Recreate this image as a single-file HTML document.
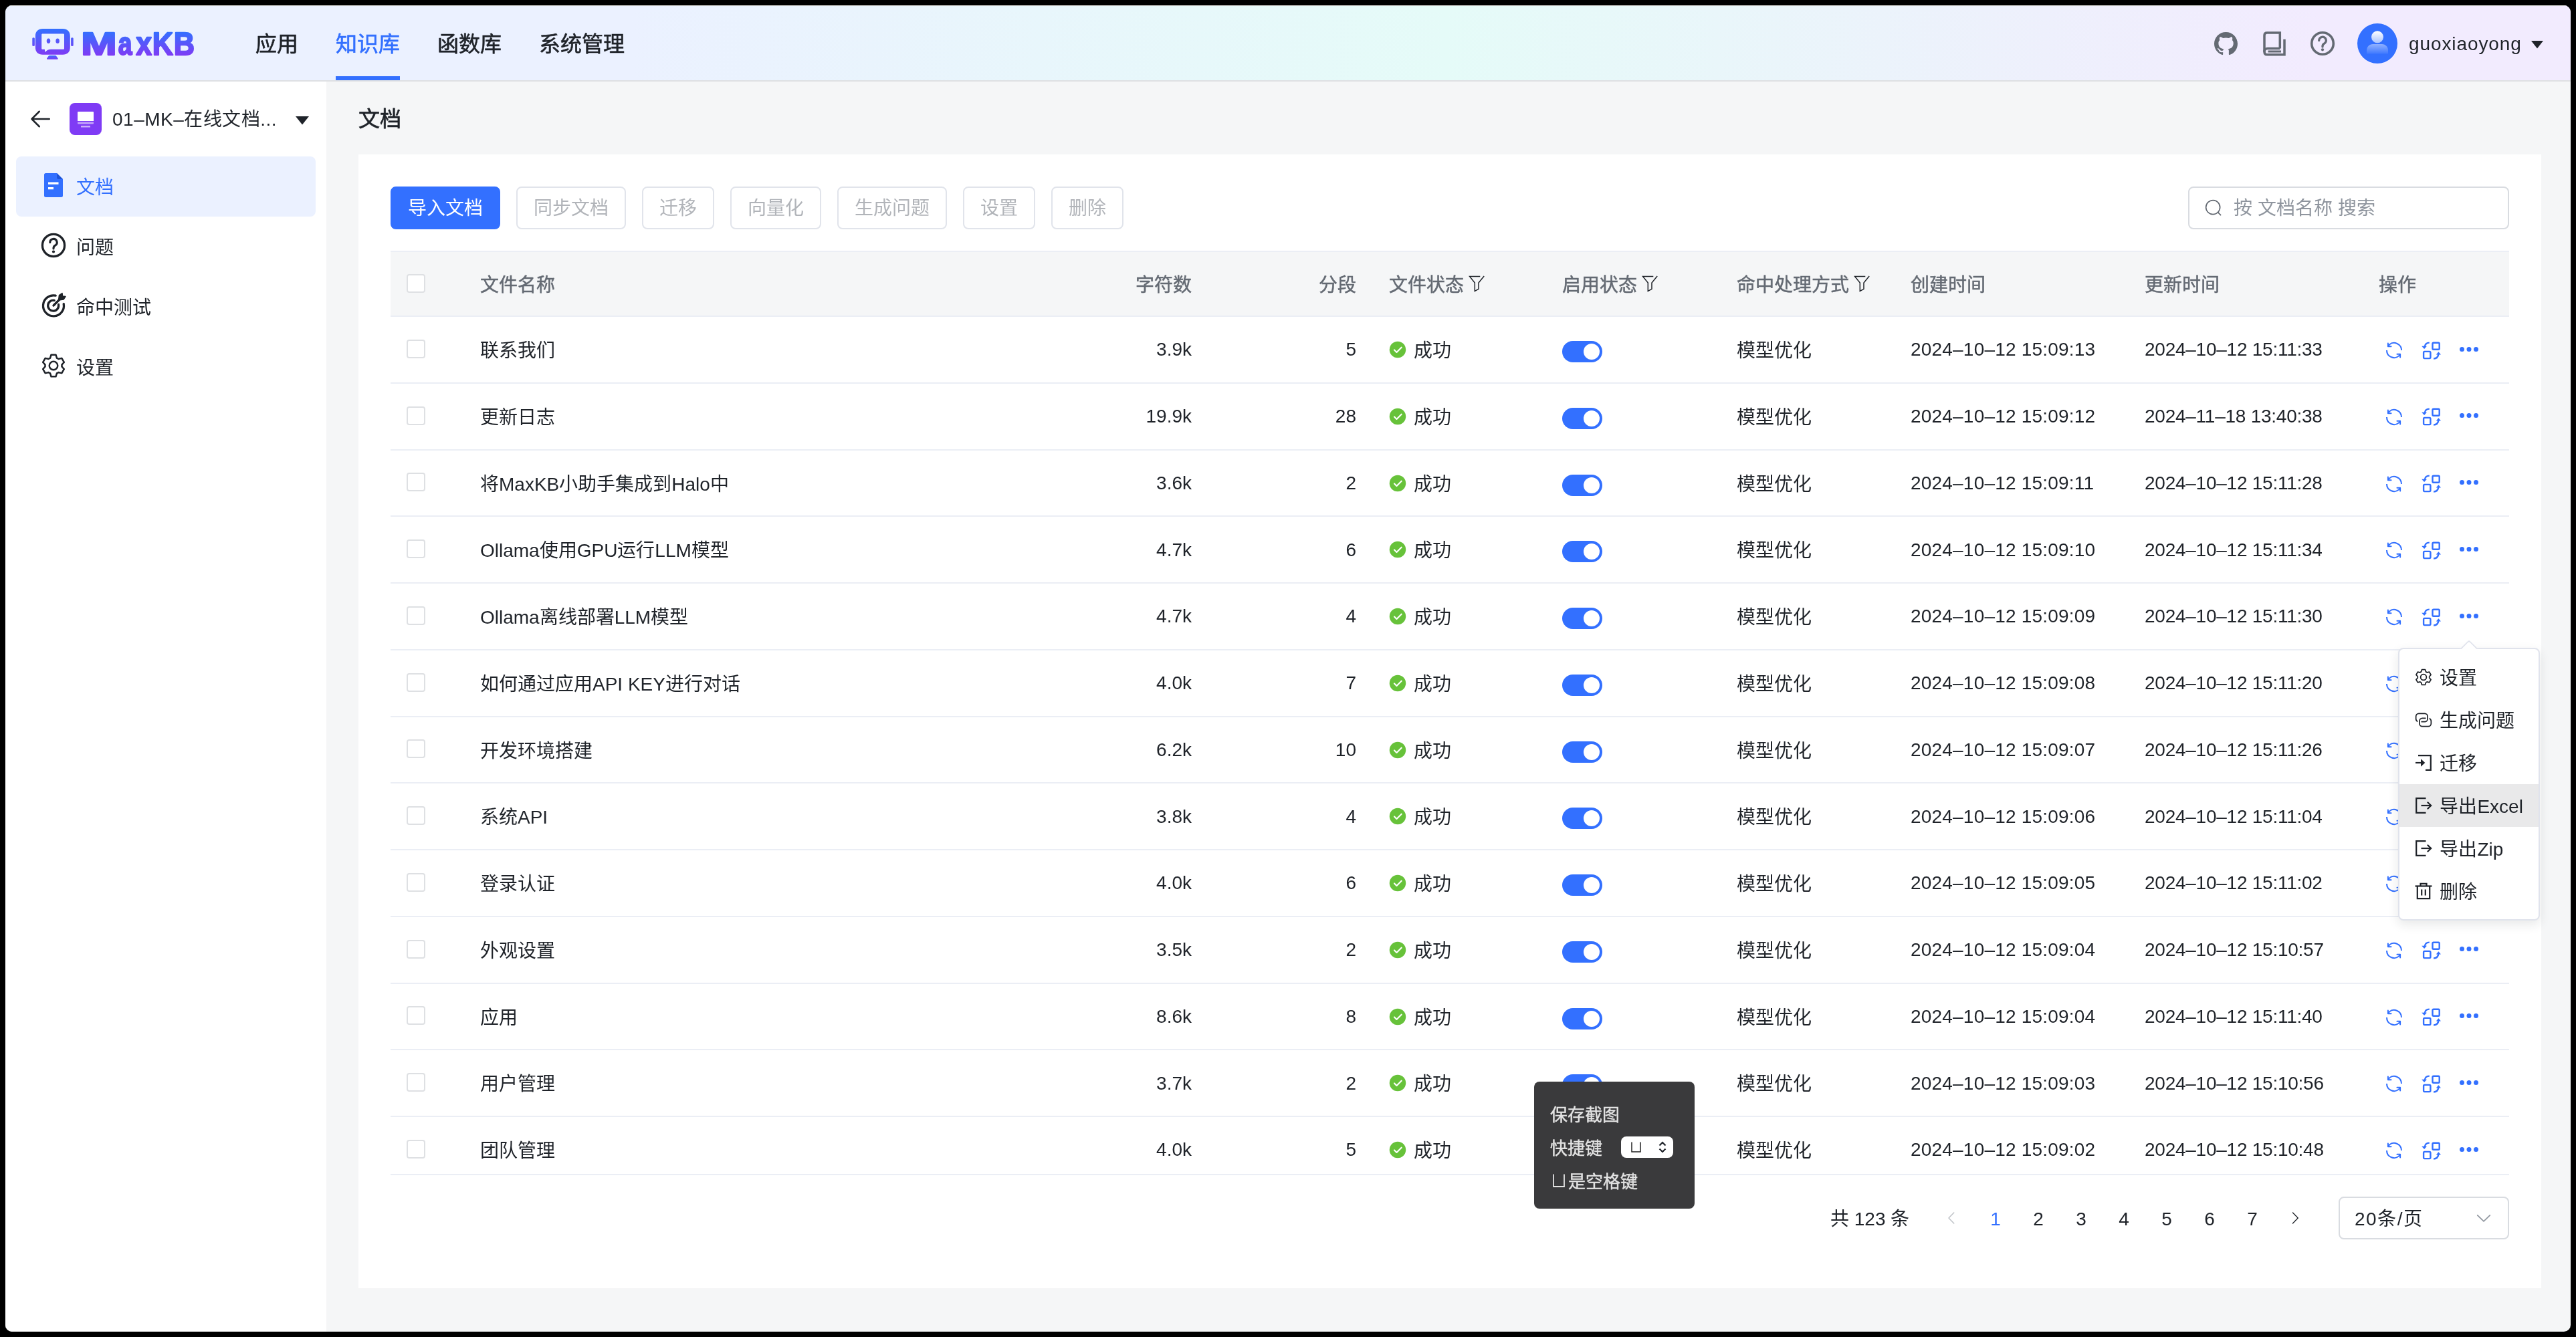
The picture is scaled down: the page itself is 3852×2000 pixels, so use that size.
<!DOCTYPE html>
<html lang="zh-CN">
<head>
<meta charset="utf-8">
<title>MaxKB</title>
<style>
*{box-sizing:border-box;margin:0;padding:0}
html,body{width:3852px;height:2000px;background:#000;overflow:hidden}
body{font-family:"Liberation Sans",sans-serif;color:#1f2329;position:relative}
#frame:after{content:"";position:absolute;left:0;right:0;top:0;height:1px;background:#e5e6e1;z-index:9}
#frame{position:absolute;left:8px;top:8px;width:3836px;height:1984px;border-radius:10px;overflow:hidden;background:#f5f6f7}
#win{position:absolute;left:0;top:0;width:1918px;height:992px;zoom:2;font-size:14px;line-height:22px;will-change:transform}
.abs{position:absolute}
svg{display:block}
/* header */
#hdr{position:absolute;left:0;top:0;width:1918px;height:57px;border-bottom:1px solid #dee0e3;
 background:linear-gradient(90deg,#ebf1ff 24.34%,#e5fbf8 56.18%,#f2ebfe 90.18%)}
.nav{position:absolute;top:0;height:56px;line-height:58.600px;font-size:16px;-webkit-text-stroke:0.300px currentColor;color:#1f2329;white-space:nowrap}
.nav.act{color:#3370ff}
.nav.act:after{content:"";position:absolute;left:0;right:0;bottom:0;height:3px;background:#3370ff}
/* sidebar */
#side{position:absolute;left:0;top:57px;width:240px;height:935px;background:#fff}
.mi{position:absolute;left:8px;width:224px;height:45px;border-radius:4px;font-size:14px;line-height:45px;color:#1f2329}
.mi.act{background:#ebf1ff;color:#3370ff}
.mi span{position:absolute;left:45.100px;top:0.900px}
.mi svg{position:absolute;left:20px;top:13.5px}
/* content */
#title{position:absolute;left:264.100px;top:72.800px;font-size:16px;line-height:24px;-webkit-text-stroke:0.350px currentColor}
#card{position:absolute;left:264px;top:111.5px;width:1632px;height:848px;background:#fff}
.btn{position:absolute;top:135.500px;height:32px;border-radius:4px;border:1px solid #e1e4eb;background:#fff;color:#b1b4b9;font-size:14px;line-height:31px;text-align:center;white-space:nowrap}
.btn.pri{background:#3370ff;border-color:#3370ff;color:#fff}
</style>
</head>
<body>
<div id="frame"><div id="win">
<!-- header -->
<div id="hdr">
 <svg class="abs" style="left:20px;top:17.250px" width="31" height="23" viewBox="0 0 62 46">
  <defs><linearGradient id="lg" gradientUnits="userSpaceOnUse" x1="0" y1="0" x2="0" y2="39"><stop offset="0" stop-color="#3370ff"/><stop offset="1" stop-color="#7f3bf5"/></linearGradient>
  <linearGradient id="lg2" gradientUnits="userSpaceOnUse" x1="0" y1="40" x2="0" y2="46"><stop offset="0" stop-color="#3d6cff"/><stop offset="1" stop-color="#7f3bf5"/></linearGradient></defs>
  <rect x=".3" y="13.200" width="3.600" height="12.900" rx="1.500" fill="url(#lg)"/>
  <rect x="58.100" y="13.200" width="3.600" height="12.900" rx="1.500" fill="url(#lg)"/>
  <path fill="url(#lg)" fill-rule="evenodd" d="M15.900.1h29.900c7 0 11 4 11 11v16.700c0 7-4 11-11 11H15.900c-7 0-11-4-11-11V11.100c0-7 4-11 11-11zM15.700 7.500c-1 0-1.500.5-1.500 1.500v20.200c0 1 .5 1.500 1.500 1.500h3.100l.5 4.300c2.600-2.800 5.200-4.300 9.200-4.300h18c1 0 1.500-.5 1.500-1.500V9c0-1-.5-1.500-1.500-1.500z"/>
  <ellipse cx="24.500" cy="18.300" rx="2.750" ry="3.800" fill="url(#lg)"/><ellipse cx="38.100" cy="18.300" rx="2.750" ry="3.800" fill="url(#lg)"/>
  <path fill="url(#lg2)" d="M26.300 40h8.200c.6 0 1 .2 1.400.6l2.500 3.400c.6.800.2 1.800-.9 1.800H23.200c-1.100 0-1.500-1-.9-1.800l2.600-3.400c.4-.4.800-.6 1.400-.6z"/>
 </svg>
 <svg class="abs" style="left:56px;top:17px" width="92" height="24" viewBox="0 0 92 24">
  <defs><linearGradient id="lgt" gradientUnits="userSpaceOnUse" x1="0" y1="-17.500" x2="0" y2="0.500"><stop offset="0" stop-color="#3370ff"/><stop offset="1" stop-color="#7f3bf5"/></linearGradient></defs>
  <g font-family="Liberation Sans" font-weight="bold" font-size="24" fill="url(#lgt)" stroke="url(#lgt)" stroke-width="1.200" stroke-linejoin="round"><text transform="translate(0.657 20.150) scale(1.335 1)">M</text><text transform="translate(28.420 20.150) scale(0.775 1)">a</text><text transform="translate(41.730 20.150) scale(0.873 1)">x</text><text transform="translate(54.000 20.150) scale(0.889 1)">K</text><text transform="translate(70.050 20.150) scale(0.890 1)">B</text></g>
 </svg>
 <div class="nav" style="left:187px">应用</div>
 <div class="nav act" style="left:247px">知识库</div>
 <div class="nav" style="left:323px">函数库</div>
 <div class="nav" style="left:399px">系统管理</div>
</div>
<!-- sidebar -->
<div id="side"></div>
<div class="abs" style="left:48px;top:73px;width:24px;height:24px;border-radius:4px;background:#7f3bf5"></div>
<div class="abs" style="left:80px;top:73.5px;font-size:14px;line-height:24px;white-space:nowrap;letter-spacing:0.250px">01–MK–在线文档...</div>
<div class="mi act" style="top:113px"><span>文档</span></div>
<div class="mi" style="top:158px"><span>问题</span></div>
<div class="mi" style="top:203px"><span>命中测试</span></div>
<div class="mi" style="top:248px"><span>设置</span></div>
<!-- content -->
<div id="title">文档</div>
<div id="card"></div>
<div class="btn pri" style="left:288px;width:82px">导入文档</div>
<div class="btn" style="left:382px;width:82px">同步文档</div>
<div class="btn" style="left:476px;width:54px">迁移</div>
<div class="btn" style="left:542px;width:68px">向量化</div>
<div class="btn" style="left:622px;width:82px">生成问题</div>
<div class="btn" style="left:716px;width:54px">设置</div>
<div class="btn" style="left:782px;width:54px">删除</div>
<!-- header right -->
<svg class="abs" style="left:1651.6px;top:19.8px" width="17.5" height="17.5" viewBox="0 0 16 16"><path fill="#646a73" d="M8 0C3.58 0 0 3.58 0 8c0 3.54 2.29 6.53 5.47 7.59.4.07.55-.17.55-.38 0-.19-.01-.82-.01-1.49-2.01.37-2.53-.49-2.69-.94-.09-.23-.48-.94-.82-1.13-.28-.15-.68-.52-.01-.53.63-.01 1.08.58 1.23.82.72 1.21 1.87.87 2.33.66.07-.52.28-.87.51-1.07-1.78-.2-3.64-.89-3.64-3.95 0-.87.31-1.59.82-2.15-.08-.2-.36-1.02.08-2.12 0 0 .67-.21 2.2.82.64-.18 1.32-.27 2-.27.68 0 1.36.09 2 .27 1.53-1.04 2.2-.82 2.2-.82.44 1.1.16 1.92.08 2.12.51.56.82 1.27.82 2.15 0 3.07-1.87 3.75-3.65 3.95.29.25.54.73.54 1.48 0 1.07-.01 1.93-.01 2.2 0 .21.15.46.55.38A8.013 8.013 0 0016 8c0-4.42-3.58-8-8-8z"/></svg>
<svg class="abs" style="left:1688px;top:19.35px" width="17" height="18.5" viewBox="0 0 34 37" fill="none" stroke="#646a73" stroke-width="3.5"><path d="M25.3 25.5V2H6Q2 2 2 6V30.8Q2 34.800 6 34.800H32V11.800"/><path d="M25.300 25.500H7Q2 25.500 2 30.500"/><path d="M7.500 30H27" stroke-width="3"/></svg>
<svg class="abs" style="left:1722.5px;top:18.5px" width="20" height="20" viewBox="0 0 40 40" fill="none" stroke="#646a73" stroke-width="3.6"><circle cx="20" cy="20" r="16.3"/><path d="M14.7 15.5a5.3 5.3 0 1 1 7.8 4.7c-1.7 1-2.5 2-2.5 4v.8" stroke-linecap="round" stroke-width="3.3"/><circle cx="20" cy="29.3" r="2.1" fill="#646a73" stroke="none"/></svg>
<svg class="abs" style="left:1758.5px;top:13.5px" width="30" height="30" viewBox="0 0 60 60">
 <defs><linearGradient id="av1" x1="0" y1="0" x2="0" y2="1"><stop offset="0" stop-color="#fff"/><stop offset="1" stop-color="#a9c3ff"/></linearGradient>
 <linearGradient id="av2" x1="0" y1="0" x2="0" y2="1"><stop offset="0" stop-color="#8fb0ff"/><stop offset="1" stop-color="#3f79ff"/></linearGradient></defs>
 <circle cx="30" cy="30" r="30" fill="#3370ff"/><circle cx="30" cy="20.3" r="9" fill="url(#av1)"/>
 <path d="M14 45.500V40.500c0-5.500 4-9.500 9.500-9.500h13c5.500 0 9.500 4 9.500 9.500V45.500z" fill="url(#av2)"/>
</svg>
<div class="abs" style="left:1797px;top:18px;font-size:14px;line-height:22px;white-space:nowrap;letter-spacing:0.45px">guoxiaoyong</div>
<svg class="abs" style="left:1888.5px;top:26.5px" width="9" height="6" viewBox="0 0 18 12"><path d="M0 0h18l-9 11.500z" fill="#1f2329"/></svg>
<style>
#tbl{position:absolute;left:288px;top:183.5px;width:1584px;height:691.5px;overflow:hidden;border-top:1px solid #ebeef5;font-size:14px}
#tbl:after{content:"";position:absolute;left:0;right:0;bottom:0;height:1px;background:#ebeef5}
.th{position:relative;height:48.5px;background:#f5f6f7;border-bottom:1px solid #ebeef5;color:#646a73;line-height:49.500px;-webkit-text-stroke:0.25px #646a73}
.tr{position:relative;height:49.875px;border-bottom:1px solid #ebeef5;line-height:51px;color:#1f2329}
.c{position:absolute;top:0;white-space:nowrap}
.c1{left:67px}.c2{right:985px}.c3{right:862px}.c4{left:746.5px}.c5{left:876px}.c6{left:1006.5px}.c7{left:1136.5px}.c8{left:1311.5px}.c9{left:1486.5px}
.cb{position:absolute;left:12px;width:14px;height:14px;border:1px solid #dee0e3;border-radius:2px;background:#fff}
.th .cb{top:16.500px}.tr .cb{top:16.900px}
.sw{position:absolute;left:876px;top:18.1px;width:30px;height:16px;border-radius:8px;background:#3370ff}
.sw:after{content:"";position:absolute;right:2px;top:2px;width:12px;height:12px;border-radius:6px;background:#fff}
.st{position:absolute;left:746px;top:17.6px}
.c4t{left:765px}
.ic{position:absolute;top:16.5px}
.fi{display:inline-block;vertical-align:top;margin-left:3.500px;margin-top:17.700px}
.dt{letter-spacing:-.125px}.c7.dt{letter-spacing:.100px}.tr .c2,.tr .c3,.tr .c7,.tr .c8{top:-.800px}
</style>

<div id="tbl">
<div class="th"><i class="cb"></i><span class="c c1">文件名称</span><span class="c c2">字符数</span><span class="c c3">分段</span><span class="c c4">文件状态<svg class="fi" width="12" height="12.5" viewBox="0 0 24 25" fill="none" stroke="#1f2329" stroke-width="1.5"><path d="M17.300 1.500H1.500L9.300 11V23.500L15 20.300V11L23.200 1"/></svg></span><span class="c c5">启用状态<svg class="fi" width="12" height="12.5" viewBox="0 0 24 25" fill="none" stroke="#1f2329" stroke-width="1.5"><path d="M17.300 1.500H1.500L9.300 11V23.500L15 20.300V11L23.200 1"/></svg></span><span class="c c6">命中处理方式<svg class="fi" width="12" height="12.5" viewBox="0 0 24 25" fill="none" stroke="#1f2329" stroke-width="1.5"><path d="M17.300 1.500H1.500L9.300 11V23.500L15 20.300V11L23.200 1"/></svg></span><span class="c c7">创建时间</span><span class="c c8">更新时间</span><span class="c c9">操作</span></div>
<div class="tr"><i class="cb"></i><span class="c c1">联系我们</span><span class="c c2">3.9k</span><span class="c c3">5</span><svg class="st" width="14" height="14" viewBox="0 0 1024 1024"><path fill="#67c23a" d="M512 64a448 448 0 1 1 0 896 448 448 0 0 1 0-896zm-55.808 536.384-99.520-99.584a38.400 38.400 0 1 0-54.336 54.336l126.720 126.720a38.400 38.400 0 0 0 54.336 0l262.400-262.464a38.400 38.400 0 1 0-54.272-54.336L456.192 600.384z"/></svg><span class="c c4t">成功</span><i class="sw"></i><span class="c c6">模型优化</span><span class="c c7 dt">2024–10–12 15:09:13</span><span class="c c8 dt">2024–10–12 15:11:33</span><svg class="ic" style="left:1490px;top:17px" width="16" height="16" viewBox="0 0 1024 1024"><path fill="#3370ff" d="M771.776 794.880A384 384 0 0 1 128 512h64a320 320 0 0 0 555.712 216.448H654.720a32 32 0 1 1 0-64h149.056a32 32 0 0 1 32 32v148.928a32 32 0 1 1-64 0v-50.560zM276.288 295.616h92.992a32 32 0 0 1 0 64H220.160a32 32 0 0 1-32-32V178.560a32 32 0 0 1 64 0v50.560A384 384 0 0 1 896.128 512h-64a320 320 0 0 0-555.776-216.384z"/></svg><svg class="ic" style="left:1518.500px;top:18.250px" width="14.500" height="13.500" viewBox="0 0 29 27" fill="none" stroke="#3370ff" stroke-width="2.400"><rect x="16.500" y="1.700" width="10.200" height="10.100" rx="1.500"/><rect x="3.100" y="14.900" width="10.300" height="10.200" rx="1.500"/><path d="M11.800 1.600Q5.500 1.800 4.800 7.500"/><path d="M.2 6.800H8L4.100 11z" fill="#3370ff" stroke="none"/><path d="M18.100 25.500Q24.500 25.300 25.300 19"/><path d="M25.400 15.300L29 19.500H21.800z" fill="#3370ff" stroke="none"/></svg><svg class="ic" style="left:1546px;top:15.8px" width="16" height="16" viewBox="0 0 1024 1024"><path fill="#3370ff" d="M176 416a112 112 0 1 1 0 224 112 112 0 0 1 0-224zm336 0a112 112 0 1 1 0 224 112 112 0 0 1 0-224zm336 0a112 112 0 1 1 0 224 112 112 0 0 1 0-224z"/></svg></div>
<div class="tr"><i class="cb"></i><span class="c c1">更新日志</span><span class="c c2">19.9k</span><span class="c c3">28</span><svg class="st" width="14" height="14" viewBox="0 0 1024 1024"><path fill="#67c23a" d="M512 64a448 448 0 1 1 0 896 448 448 0 0 1 0-896zm-55.808 536.384-99.520-99.584a38.400 38.400 0 1 0-54.336 54.336l126.720 126.720a38.400 38.400 0 0 0 54.336 0l262.400-262.464a38.400 38.400 0 1 0-54.272-54.336L456.192 600.384z"/></svg><span class="c c4t">成功</span><i class="sw"></i><span class="c c6">模型优化</span><span class="c c7 dt">2024–10–12 15:09:12</span><span class="c c8 dt">2024–11–18 13:40:38</span><svg class="ic" style="left:1490px;top:17px" width="16" height="16" viewBox="0 0 1024 1024"><path fill="#3370ff" d="M771.776 794.880A384 384 0 0 1 128 512h64a320 320 0 0 0 555.712 216.448H654.720a32 32 0 1 1 0-64h149.056a32 32 0 0 1 32 32v148.928a32 32 0 1 1-64 0v-50.560zM276.288 295.616h92.992a32 32 0 0 1 0 64H220.160a32 32 0 0 1-32-32V178.560a32 32 0 0 1 64 0v50.560A384 384 0 0 1 896.128 512h-64a320 320 0 0 0-555.776-216.384z"/></svg><svg class="ic" style="left:1518.500px;top:18.250px" width="14.500" height="13.500" viewBox="0 0 29 27" fill="none" stroke="#3370ff" stroke-width="2.400"><rect x="16.500" y="1.700" width="10.200" height="10.100" rx="1.500"/><rect x="3.100" y="14.900" width="10.300" height="10.200" rx="1.500"/><path d="M11.800 1.600Q5.500 1.800 4.800 7.500"/><path d="M.2 6.800H8L4.100 11z" fill="#3370ff" stroke="none"/><path d="M18.100 25.500Q24.500 25.300 25.300 19"/><path d="M25.400 15.300L29 19.500H21.800z" fill="#3370ff" stroke="none"/></svg><svg class="ic" style="left:1546px;top:15.8px" width="16" height="16" viewBox="0 0 1024 1024"><path fill="#3370ff" d="M176 416a112 112 0 1 1 0 224 112 112 0 0 1 0-224zm336 0a112 112 0 1 1 0 224 112 112 0 0 1 0-224zm336 0a112 112 0 1 1 0 224 112 112 0 0 1 0-224z"/></svg></div>
<div class="tr"><i class="cb"></i><span class="c c1">将MaxKB小助手集成到Halo中</span><span class="c c2">3.6k</span><span class="c c3">2</span><svg class="st" width="14" height="14" viewBox="0 0 1024 1024"><path fill="#67c23a" d="M512 64a448 448 0 1 1 0 896 448 448 0 0 1 0-896zm-55.808 536.384-99.520-99.584a38.400 38.400 0 1 0-54.336 54.336l126.720 126.720a38.400 38.400 0 0 0 54.336 0l262.400-262.464a38.400 38.400 0 1 0-54.272-54.336L456.192 600.384z"/></svg><span class="c c4t">成功</span><i class="sw"></i><span class="c c6">模型优化</span><span class="c c7 dt">2024–10–12 15:09:11</span><span class="c c8 dt">2024–10–12 15:11:28</span><svg class="ic" style="left:1490px;top:17px" width="16" height="16" viewBox="0 0 1024 1024"><path fill="#3370ff" d="M771.776 794.880A384 384 0 0 1 128 512h64a320 320 0 0 0 555.712 216.448H654.720a32 32 0 1 1 0-64h149.056a32 32 0 0 1 32 32v148.928a32 32 0 1 1-64 0v-50.560zM276.288 295.616h92.992a32 32 0 0 1 0 64H220.160a32 32 0 0 1-32-32V178.560a32 32 0 0 1 64 0v50.560A384 384 0 0 1 896.128 512h-64a320 320 0 0 0-555.776-216.384z"/></svg><svg class="ic" style="left:1518.500px;top:18.250px" width="14.500" height="13.500" viewBox="0 0 29 27" fill="none" stroke="#3370ff" stroke-width="2.400"><rect x="16.500" y="1.700" width="10.200" height="10.100" rx="1.500"/><rect x="3.100" y="14.900" width="10.300" height="10.200" rx="1.500"/><path d="M11.800 1.600Q5.500 1.800 4.800 7.500"/><path d="M.2 6.800H8L4.100 11z" fill="#3370ff" stroke="none"/><path d="M18.100 25.500Q24.500 25.300 25.300 19"/><path d="M25.400 15.300L29 19.500H21.800z" fill="#3370ff" stroke="none"/></svg><svg class="ic" style="left:1546px;top:15.8px" width="16" height="16" viewBox="0 0 1024 1024"><path fill="#3370ff" d="M176 416a112 112 0 1 1 0 224 112 112 0 0 1 0-224zm336 0a112 112 0 1 1 0 224 112 112 0 0 1 0-224zm336 0a112 112 0 1 1 0 224 112 112 0 0 1 0-224z"/></svg></div>
<div class="tr"><i class="cb"></i><span class="c c1">Ollama使用GPU运行LLM模型</span><span class="c c2">4.7k</span><span class="c c3">6</span><svg class="st" width="14" height="14" viewBox="0 0 1024 1024"><path fill="#67c23a" d="M512 64a448 448 0 1 1 0 896 448 448 0 0 1 0-896zm-55.808 536.384-99.520-99.584a38.400 38.400 0 1 0-54.336 54.336l126.720 126.720a38.400 38.400 0 0 0 54.336 0l262.400-262.464a38.400 38.400 0 1 0-54.272-54.336L456.192 600.384z"/></svg><span class="c c4t">成功</span><i class="sw"></i><span class="c c6">模型优化</span><span class="c c7 dt">2024–10–12 15:09:10</span><span class="c c8 dt">2024–10–12 15:11:34</span><svg class="ic" style="left:1490px;top:17px" width="16" height="16" viewBox="0 0 1024 1024"><path fill="#3370ff" d="M771.776 794.880A384 384 0 0 1 128 512h64a320 320 0 0 0 555.712 216.448H654.720a32 32 0 1 1 0-64h149.056a32 32 0 0 1 32 32v148.928a32 32 0 1 1-64 0v-50.560zM276.288 295.616h92.992a32 32 0 0 1 0 64H220.160a32 32 0 0 1-32-32V178.560a32 32 0 0 1 64 0v50.560A384 384 0 0 1 896.128 512h-64a320 320 0 0 0-555.776-216.384z"/></svg><svg class="ic" style="left:1518.500px;top:18.250px" width="14.500" height="13.500" viewBox="0 0 29 27" fill="none" stroke="#3370ff" stroke-width="2.400"><rect x="16.500" y="1.700" width="10.200" height="10.100" rx="1.500"/><rect x="3.100" y="14.900" width="10.300" height="10.200" rx="1.500"/><path d="M11.800 1.600Q5.500 1.800 4.800 7.500"/><path d="M.2 6.800H8L4.100 11z" fill="#3370ff" stroke="none"/><path d="M18.100 25.500Q24.500 25.300 25.300 19"/><path d="M25.400 15.300L29 19.500H21.800z" fill="#3370ff" stroke="none"/></svg><svg class="ic" style="left:1546px;top:15.8px" width="16" height="16" viewBox="0 0 1024 1024"><path fill="#3370ff" d="M176 416a112 112 0 1 1 0 224 112 112 0 0 1 0-224zm336 0a112 112 0 1 1 0 224 112 112 0 0 1 0-224zm336 0a112 112 0 1 1 0 224 112 112 0 0 1 0-224z"/></svg></div>
<div class="tr"><i class="cb"></i><span class="c c1">Ollama离线部署LLM模型</span><span class="c c2">4.7k</span><span class="c c3">4</span><svg class="st" width="14" height="14" viewBox="0 0 1024 1024"><path fill="#67c23a" d="M512 64a448 448 0 1 1 0 896 448 448 0 0 1 0-896zm-55.808 536.384-99.520-99.584a38.400 38.400 0 1 0-54.336 54.336l126.720 126.720a38.400 38.400 0 0 0 54.336 0l262.400-262.464a38.400 38.400 0 1 0-54.272-54.336L456.192 600.384z"/></svg><span class="c c4t">成功</span><i class="sw"></i><span class="c c6">模型优化</span><span class="c c7 dt">2024–10–12 15:09:09</span><span class="c c8 dt">2024–10–12 15:11:30</span><svg class="ic" style="left:1490px;top:17px" width="16" height="16" viewBox="0 0 1024 1024"><path fill="#3370ff" d="M771.776 794.880A384 384 0 0 1 128 512h64a320 320 0 0 0 555.712 216.448H654.720a32 32 0 1 1 0-64h149.056a32 32 0 0 1 32 32v148.928a32 32 0 1 1-64 0v-50.560zM276.288 295.616h92.992a32 32 0 0 1 0 64H220.160a32 32 0 0 1-32-32V178.560a32 32 0 0 1 64 0v50.560A384 384 0 0 1 896.128 512h-64a320 320 0 0 0-555.776-216.384z"/></svg><svg class="ic" style="left:1518.500px;top:18.250px" width="14.500" height="13.500" viewBox="0 0 29 27" fill="none" stroke="#3370ff" stroke-width="2.400"><rect x="16.500" y="1.700" width="10.200" height="10.100" rx="1.500"/><rect x="3.100" y="14.900" width="10.300" height="10.200" rx="1.500"/><path d="M11.800 1.600Q5.500 1.800 4.800 7.500"/><path d="M.2 6.800H8L4.100 11z" fill="#3370ff" stroke="none"/><path d="M18.100 25.500Q24.500 25.300 25.300 19"/><path d="M25.400 15.300L29 19.500H21.800z" fill="#3370ff" stroke="none"/></svg><svg class="ic" style="left:1546px;top:15.8px" width="16" height="16" viewBox="0 0 1024 1024"><path fill="#3370ff" d="M176 416a112 112 0 1 1 0 224 112 112 0 0 1 0-224zm336 0a112 112 0 1 1 0 224 112 112 0 0 1 0-224zm336 0a112 112 0 1 1 0 224 112 112 0 0 1 0-224z"/></svg></div>
<div class="tr"><i class="cb"></i><span class="c c1">如何通过应用API KEY进行对话</span><span class="c c2">4.0k</span><span class="c c3">7</span><svg class="st" width="14" height="14" viewBox="0 0 1024 1024"><path fill="#67c23a" d="M512 64a448 448 0 1 1 0 896 448 448 0 0 1 0-896zm-55.808 536.384-99.520-99.584a38.400 38.400 0 1 0-54.336 54.336l126.720 126.720a38.400 38.400 0 0 0 54.336 0l262.400-262.464a38.400 38.400 0 1 0-54.272-54.336L456.192 600.384z"/></svg><span class="c c4t">成功</span><i class="sw"></i><span class="c c6">模型优化</span><span class="c c7 dt">2024–10–12 15:09:08</span><span class="c c8 dt">2024–10–12 15:11:20</span><svg class="ic" style="left:1490px;top:17px" width="16" height="16" viewBox="0 0 1024 1024"><path fill="#3370ff" d="M771.776 794.880A384 384 0 0 1 128 512h64a320 320 0 0 0 555.712 216.448H654.720a32 32 0 1 1 0-64h149.056a32 32 0 0 1 32 32v148.928a32 32 0 1 1-64 0v-50.560zM276.288 295.616h92.992a32 32 0 0 1 0 64H220.160a32 32 0 0 1-32-32V178.560a32 32 0 0 1 64 0v50.560A384 384 0 0 1 896.128 512h-64a320 320 0 0 0-555.776-216.384z"/></svg><svg class="ic" style="left:1518.500px;top:18.250px" width="14.500" height="13.500" viewBox="0 0 29 27" fill="none" stroke="#3370ff" stroke-width="2.400"><rect x="16.500" y="1.700" width="10.200" height="10.100" rx="1.500"/><rect x="3.100" y="14.900" width="10.300" height="10.200" rx="1.500"/><path d="M11.800 1.600Q5.500 1.800 4.800 7.500"/><path d="M.2 6.800H8L4.100 11z" fill="#3370ff" stroke="none"/><path d="M18.100 25.500Q24.500 25.300 25.300 19"/><path d="M25.400 15.300L29 19.500H21.800z" fill="#3370ff" stroke="none"/></svg><svg class="ic" style="left:1546px;top:15.8px" width="16" height="16" viewBox="0 0 1024 1024"><path fill="#3370ff" d="M176 416a112 112 0 1 1 0 224 112 112 0 0 1 0-224zm336 0a112 112 0 1 1 0 224 112 112 0 0 1 0-224zm336 0a112 112 0 1 1 0 224 112 112 0 0 1 0-224z"/></svg></div>
<div class="tr"><i class="cb"></i><span class="c c1">开发环境搭建</span><span class="c c2">6.2k</span><span class="c c3">10</span><svg class="st" width="14" height="14" viewBox="0 0 1024 1024"><path fill="#67c23a" d="M512 64a448 448 0 1 1 0 896 448 448 0 0 1 0-896zm-55.808 536.384-99.520-99.584a38.400 38.400 0 1 0-54.336 54.336l126.720 126.720a38.400 38.400 0 0 0 54.336 0l262.400-262.464a38.400 38.400 0 1 0-54.272-54.336L456.192 600.384z"/></svg><span class="c c4t">成功</span><i class="sw"></i><span class="c c6">模型优化</span><span class="c c7 dt">2024–10–12 15:09:07</span><span class="c c8 dt">2024–10–12 15:11:26</span><svg class="ic" style="left:1490px;top:17px" width="16" height="16" viewBox="0 0 1024 1024"><path fill="#3370ff" d="M771.776 794.880A384 384 0 0 1 128 512h64a320 320 0 0 0 555.712 216.448H654.720a32 32 0 1 1 0-64h149.056a32 32 0 0 1 32 32v148.928a32 32 0 1 1-64 0v-50.560zM276.288 295.616h92.992a32 32 0 0 1 0 64H220.160a32 32 0 0 1-32-32V178.560a32 32 0 0 1 64 0v50.560A384 384 0 0 1 896.128 512h-64a320 320 0 0 0-555.776-216.384z"/></svg><svg class="ic" style="left:1518.500px;top:18.250px" width="14.500" height="13.500" viewBox="0 0 29 27" fill="none" stroke="#3370ff" stroke-width="2.400"><rect x="16.500" y="1.700" width="10.200" height="10.100" rx="1.500"/><rect x="3.100" y="14.900" width="10.300" height="10.200" rx="1.500"/><path d="M11.800 1.600Q5.500 1.800 4.800 7.500"/><path d="M.2 6.800H8L4.100 11z" fill="#3370ff" stroke="none"/><path d="M18.100 25.500Q24.500 25.300 25.300 19"/><path d="M25.400 15.300L29 19.500H21.800z" fill="#3370ff" stroke="none"/></svg><svg class="ic" style="left:1546px;top:15.8px" width="16" height="16" viewBox="0 0 1024 1024"><path fill="#3370ff" d="M176 416a112 112 0 1 1 0 224 112 112 0 0 1 0-224zm336 0a112 112 0 1 1 0 224 112 112 0 0 1 0-224zm336 0a112 112 0 1 1 0 224 112 112 0 0 1 0-224z"/></svg></div>
<div class="tr"><i class="cb"></i><span class="c c1">系统API</span><span class="c c2">3.8k</span><span class="c c3">4</span><svg class="st" width="14" height="14" viewBox="0 0 1024 1024"><path fill="#67c23a" d="M512 64a448 448 0 1 1 0 896 448 448 0 0 1 0-896zm-55.808 536.384-99.520-99.584a38.400 38.400 0 1 0-54.336 54.336l126.720 126.720a38.400 38.400 0 0 0 54.336 0l262.400-262.464a38.400 38.400 0 1 0-54.272-54.336L456.192 600.384z"/></svg><span class="c c4t">成功</span><i class="sw"></i><span class="c c6">模型优化</span><span class="c c7 dt">2024–10–12 15:09:06</span><span class="c c8 dt">2024–10–12 15:11:04</span><svg class="ic" style="left:1490px;top:17px" width="16" height="16" viewBox="0 0 1024 1024"><path fill="#3370ff" d="M771.776 794.880A384 384 0 0 1 128 512h64a320 320 0 0 0 555.712 216.448H654.720a32 32 0 1 1 0-64h149.056a32 32 0 0 1 32 32v148.928a32 32 0 1 1-64 0v-50.560zM276.288 295.616h92.992a32 32 0 0 1 0 64H220.160a32 32 0 0 1-32-32V178.560a32 32 0 0 1 64 0v50.560A384 384 0 0 1 896.128 512h-64a320 320 0 0 0-555.776-216.384z"/></svg><svg class="ic" style="left:1518.500px;top:18.250px" width="14.500" height="13.500" viewBox="0 0 29 27" fill="none" stroke="#3370ff" stroke-width="2.400"><rect x="16.500" y="1.700" width="10.200" height="10.100" rx="1.500"/><rect x="3.100" y="14.900" width="10.300" height="10.200" rx="1.500"/><path d="M11.800 1.600Q5.500 1.800 4.800 7.500"/><path d="M.2 6.800H8L4.100 11z" fill="#3370ff" stroke="none"/><path d="M18.100 25.500Q24.500 25.300 25.300 19"/><path d="M25.400 15.300L29 19.500H21.800z" fill="#3370ff" stroke="none"/></svg><svg class="ic" style="left:1546px;top:15.8px" width="16" height="16" viewBox="0 0 1024 1024"><path fill="#3370ff" d="M176 416a112 112 0 1 1 0 224 112 112 0 0 1 0-224zm336 0a112 112 0 1 1 0 224 112 112 0 0 1 0-224zm336 0a112 112 0 1 1 0 224 112 112 0 0 1 0-224z"/></svg></div>
<div class="tr"><i class="cb"></i><span class="c c1">登录认证</span><span class="c c2">4.0k</span><span class="c c3">6</span><svg class="st" width="14" height="14" viewBox="0 0 1024 1024"><path fill="#67c23a" d="M512 64a448 448 0 1 1 0 896 448 448 0 0 1 0-896zm-55.808 536.384-99.520-99.584a38.400 38.400 0 1 0-54.336 54.336l126.720 126.720a38.400 38.400 0 0 0 54.336 0l262.400-262.464a38.400 38.400 0 1 0-54.272-54.336L456.192 600.384z"/></svg><span class="c c4t">成功</span><i class="sw"></i><span class="c c6">模型优化</span><span class="c c7 dt">2024–10–12 15:09:05</span><span class="c c8 dt">2024–10–12 15:11:02</span><svg class="ic" style="left:1490px;top:17px" width="16" height="16" viewBox="0 0 1024 1024"><path fill="#3370ff" d="M771.776 794.880A384 384 0 0 1 128 512h64a320 320 0 0 0 555.712 216.448H654.720a32 32 0 1 1 0-64h149.056a32 32 0 0 1 32 32v148.928a32 32 0 1 1-64 0v-50.560zM276.288 295.616h92.992a32 32 0 0 1 0 64H220.160a32 32 0 0 1-32-32V178.560a32 32 0 0 1 64 0v50.560A384 384 0 0 1 896.128 512h-64a320 320 0 0 0-555.776-216.384z"/></svg><svg class="ic" style="left:1518.500px;top:18.250px" width="14.500" height="13.500" viewBox="0 0 29 27" fill="none" stroke="#3370ff" stroke-width="2.400"><rect x="16.500" y="1.700" width="10.200" height="10.100" rx="1.500"/><rect x="3.100" y="14.900" width="10.300" height="10.200" rx="1.500"/><path d="M11.800 1.600Q5.500 1.800 4.800 7.500"/><path d="M.2 6.800H8L4.100 11z" fill="#3370ff" stroke="none"/><path d="M18.100 25.500Q24.500 25.300 25.300 19"/><path d="M25.400 15.300L29 19.500H21.800z" fill="#3370ff" stroke="none"/></svg><svg class="ic" style="left:1546px;top:15.8px" width="16" height="16" viewBox="0 0 1024 1024"><path fill="#3370ff" d="M176 416a112 112 0 1 1 0 224 112 112 0 0 1 0-224zm336 0a112 112 0 1 1 0 224 112 112 0 0 1 0-224zm336 0a112 112 0 1 1 0 224 112 112 0 0 1 0-224z"/></svg></div>
<div class="tr"><i class="cb"></i><span class="c c1">外观设置</span><span class="c c2">3.5k</span><span class="c c3">2</span><svg class="st" width="14" height="14" viewBox="0 0 1024 1024"><path fill="#67c23a" d="M512 64a448 448 0 1 1 0 896 448 448 0 0 1 0-896zm-55.808 536.384-99.520-99.584a38.400 38.400 0 1 0-54.336 54.336l126.720 126.720a38.400 38.400 0 0 0 54.336 0l262.400-262.464a38.400 38.400 0 1 0-54.272-54.336L456.192 600.384z"/></svg><span class="c c4t">成功</span><i class="sw"></i><span class="c c6">模型优化</span><span class="c c7 dt">2024–10–12 15:09:04</span><span class="c c8 dt">2024–10–12 15:10:57</span><svg class="ic" style="left:1490px;top:17px" width="16" height="16" viewBox="0 0 1024 1024"><path fill="#3370ff" d="M771.776 794.880A384 384 0 0 1 128 512h64a320 320 0 0 0 555.712 216.448H654.720a32 32 0 1 1 0-64h149.056a32 32 0 0 1 32 32v148.928a32 32 0 1 1-64 0v-50.560zM276.288 295.616h92.992a32 32 0 0 1 0 64H220.160a32 32 0 0 1-32-32V178.560a32 32 0 0 1 64 0v50.560A384 384 0 0 1 896.128 512h-64a320 320 0 0 0-555.776-216.384z"/></svg><svg class="ic" style="left:1518.500px;top:18.250px" width="14.500" height="13.500" viewBox="0 0 29 27" fill="none" stroke="#3370ff" stroke-width="2.400"><rect x="16.500" y="1.700" width="10.200" height="10.100" rx="1.500"/><rect x="3.100" y="14.900" width="10.300" height="10.200" rx="1.500"/><path d="M11.800 1.600Q5.500 1.800 4.800 7.500"/><path d="M.2 6.800H8L4.100 11z" fill="#3370ff" stroke="none"/><path d="M18.100 25.500Q24.500 25.300 25.300 19"/><path d="M25.400 15.300L29 19.500H21.800z" fill="#3370ff" stroke="none"/></svg><svg class="ic" style="left:1546px;top:15.8px" width="16" height="16" viewBox="0 0 1024 1024"><path fill="#3370ff" d="M176 416a112 112 0 1 1 0 224 112 112 0 0 1 0-224zm336 0a112 112 0 1 1 0 224 112 112 0 0 1 0-224zm336 0a112 112 0 1 1 0 224 112 112 0 0 1 0-224z"/></svg></div>
<div class="tr"><i class="cb"></i><span class="c c1">应用</span><span class="c c2">8.6k</span><span class="c c3">8</span><svg class="st" width="14" height="14" viewBox="0 0 1024 1024"><path fill="#67c23a" d="M512 64a448 448 0 1 1 0 896 448 448 0 0 1 0-896zm-55.808 536.384-99.520-99.584a38.400 38.400 0 1 0-54.336 54.336l126.720 126.720a38.400 38.400 0 0 0 54.336 0l262.400-262.464a38.400 38.400 0 1 0-54.272-54.336L456.192 600.384z"/></svg><span class="c c4t">成功</span><i class="sw"></i><span class="c c6">模型优化</span><span class="c c7 dt">2024–10–12 15:09:04</span><span class="c c8 dt">2024–10–12 15:11:40</span><svg class="ic" style="left:1490px;top:17px" width="16" height="16" viewBox="0 0 1024 1024"><path fill="#3370ff" d="M771.776 794.880A384 384 0 0 1 128 512h64a320 320 0 0 0 555.712 216.448H654.720a32 32 0 1 1 0-64h149.056a32 32 0 0 1 32 32v148.928a32 32 0 1 1-64 0v-50.560zM276.288 295.616h92.992a32 32 0 0 1 0 64H220.160a32 32 0 0 1-32-32V178.560a32 32 0 0 1 64 0v50.560A384 384 0 0 1 896.128 512h-64a320 320 0 0 0-555.776-216.384z"/></svg><svg class="ic" style="left:1518.500px;top:18.250px" width="14.500" height="13.500" viewBox="0 0 29 27" fill="none" stroke="#3370ff" stroke-width="2.400"><rect x="16.500" y="1.700" width="10.200" height="10.100" rx="1.500"/><rect x="3.100" y="14.900" width="10.300" height="10.200" rx="1.500"/><path d="M11.800 1.600Q5.500 1.800 4.800 7.500"/><path d="M.2 6.800H8L4.100 11z" fill="#3370ff" stroke="none"/><path d="M18.100 25.500Q24.500 25.300 25.300 19"/><path d="M25.400 15.300L29 19.500H21.800z" fill="#3370ff" stroke="none"/></svg><svg class="ic" style="left:1546px;top:15.8px" width="16" height="16" viewBox="0 0 1024 1024"><path fill="#3370ff" d="M176 416a112 112 0 1 1 0 224 112 112 0 0 1 0-224zm336 0a112 112 0 1 1 0 224 112 112 0 0 1 0-224zm336 0a112 112 0 1 1 0 224 112 112 0 0 1 0-224z"/></svg></div>
<div class="tr"><i class="cb"></i><span class="c c1">用户管理</span><span class="c c2">3.7k</span><span class="c c3">2</span><svg class="st" width="14" height="14" viewBox="0 0 1024 1024"><path fill="#67c23a" d="M512 64a448 448 0 1 1 0 896 448 448 0 0 1 0-896zm-55.808 536.384-99.520-99.584a38.400 38.400 0 1 0-54.336 54.336l126.720 126.720a38.400 38.400 0 0 0 54.336 0l262.400-262.464a38.400 38.400 0 1 0-54.272-54.336L456.192 600.384z"/></svg><span class="c c4t">成功</span><i class="sw"></i><span class="c c6">模型优化</span><span class="c c7 dt">2024–10–12 15:09:03</span><span class="c c8 dt">2024–10–12 15:10:56</span><svg class="ic" style="left:1490px;top:17px" width="16" height="16" viewBox="0 0 1024 1024"><path fill="#3370ff" d="M771.776 794.880A384 384 0 0 1 128 512h64a320 320 0 0 0 555.712 216.448H654.720a32 32 0 1 1 0-64h149.056a32 32 0 0 1 32 32v148.928a32 32 0 1 1-64 0v-50.560zM276.288 295.616h92.992a32 32 0 0 1 0 64H220.160a32 32 0 0 1-32-32V178.560a32 32 0 0 1 64 0v50.560A384 384 0 0 1 896.128 512h-64a320 320 0 0 0-555.776-216.384z"/></svg><svg class="ic" style="left:1518.500px;top:18.250px" width="14.500" height="13.500" viewBox="0 0 29 27" fill="none" stroke="#3370ff" stroke-width="2.400"><rect x="16.500" y="1.700" width="10.200" height="10.100" rx="1.500"/><rect x="3.100" y="14.900" width="10.300" height="10.200" rx="1.500"/><path d="M11.800 1.600Q5.500 1.800 4.800 7.500"/><path d="M.2 6.800H8L4.100 11z" fill="#3370ff" stroke="none"/><path d="M18.100 25.500Q24.500 25.300 25.300 19"/><path d="M25.400 15.300L29 19.500H21.800z" fill="#3370ff" stroke="none"/></svg><svg class="ic" style="left:1546px;top:15.8px" width="16" height="16" viewBox="0 0 1024 1024"><path fill="#3370ff" d="M176 416a112 112 0 1 1 0 224 112 112 0 0 1 0-224zm336 0a112 112 0 1 1 0 224 112 112 0 0 1 0-224zm336 0a112 112 0 1 1 0 224 112 112 0 0 1 0-224z"/></svg></div>
<div class="tr"><i class="cb"></i><span class="c c1">团队管理</span><span class="c c2">4.0k</span><span class="c c3">5</span><svg class="st" width="14" height="14" viewBox="0 0 1024 1024"><path fill="#67c23a" d="M512 64a448 448 0 1 1 0 896 448 448 0 0 1 0-896zm-55.808 536.384-99.520-99.584a38.400 38.400 0 1 0-54.336 54.336l126.720 126.720a38.400 38.400 0 0 0 54.336 0l262.400-262.464a38.400 38.400 0 1 0-54.272-54.336L456.192 600.384z"/></svg><span class="c c4t">成功</span><i class="sw"></i><span class="c c6">模型优化</span><span class="c c7 dt">2024–10–12 15:09:02</span><span class="c c8 dt">2024–10–12 15:10:48</span><svg class="ic" style="left:1490px;top:17px" width="16" height="16" viewBox="0 0 1024 1024"><path fill="#3370ff" d="M771.776 794.880A384 384 0 0 1 128 512h64a320 320 0 0 0 555.712 216.448H654.720a32 32 0 1 1 0-64h149.056a32 32 0 0 1 32 32v148.928a32 32 0 1 1-64 0v-50.560zM276.288 295.616h92.992a32 32 0 0 1 0 64H220.160a32 32 0 0 1-32-32V178.560a32 32 0 0 1 64 0v50.560A384 384 0 0 1 896.128 512h-64a320 320 0 0 0-555.776-216.384z"/></svg><svg class="ic" style="left:1518.500px;top:18.250px" width="14.500" height="13.500" viewBox="0 0 29 27" fill="none" stroke="#3370ff" stroke-width="2.400"><rect x="16.500" y="1.700" width="10.200" height="10.100" rx="1.500"/><rect x="3.100" y="14.900" width="10.300" height="10.200" rx="1.500"/><path d="M11.800 1.600Q5.500 1.800 4.800 7.500"/><path d="M.2 6.800H8L4.100 11z" fill="#3370ff" stroke="none"/><path d="M18.100 25.500Q24.500 25.300 25.300 19"/><path d="M25.400 15.300L29 19.500H21.800z" fill="#3370ff" stroke="none"/></svg><svg class="ic" style="left:1546px;top:15.8px" width="16" height="16" viewBox="0 0 1024 1024"><path fill="#3370ff" d="M176 416a112 112 0 1 1 0 224 112 112 0 0 1 0-224zm336 0a112 112 0 1 1 0 224 112 112 0 0 1 0-224zm336 0a112 112 0 1 1 0 224 112 112 0 0 1 0-224z"/></svg></div>
</div>
<!-- sidebar icons -->
<svg class="abs" style="left:16.200px;top:75px" width="20" height="20" viewBox="0 0 1024 1024"><path fill="#1f2329" d="M224 480h640a32 32 0 1 1 0 64H224a32 32 0 0 1 0-64z"/><path fill="#1f2329" d="m237.248 512 265.408 265.344a32 32 0 0 1-45.312 45.312l-288-288a32 32 0 0 1 0-45.312l288-288a32 32 0 1 1 45.312 45.312L237.248 512z"/></svg>
<svg class="abs" style="left:48px;top:73px" width="24" height="24" viewBox="0 0 48 48"><rect x="12" y="13" width="24" height="15" rx="1" fill="#fff"/><rect x="12" y="28" width="24" height="3.500" rx="1" fill="#fff" opacity=".55"/><rect x="12" y="27" width="24" height="1.600" fill="#7f3bf5"/><rect x="17" y="34" width="14" height="2.500" fill="#fff" opacity=".6"/></svg>
<svg class="abs" style="left:217.200px;top:83px" width="10" height="6.500" viewBox="0 0 20 13"><path d="M0 0h20L10 12.500z" fill="#1f2329"/></svg>
<svg class="abs" style="left:29px;top:125.500px" width="14" height="18" viewBox="0 0 28 36"><path fill="#3370ff" d="M2.500 0H19l9 9v24.500a2.500 2.500 0 0 1-2.500 2.500h-23A2.500 2.500 0 0 1 0 33.500v-31A2.500 2.500 0 0 1 2.500 0z"/><path fill="#1f54d6" d="M19 0l9 9h-6.500A2.500 2.500 0 0 1 19 6.500z"/><rect x="6" y="13.500" width="15.500" height="3.300" fill="#fff"/><rect x="6" y="21" width="8" height="3.300" fill="#fff"/></svg>
<svg class="abs" style="left:26px;top:169.400px" width="20" height="20" viewBox="0 0 40 40" fill="none" stroke="#1f2329" stroke-width="3.300"><circle cx="20" cy="20" r="16.600"/><path d="M14.800 15.600a5.200 5.200 0 1 1 7.700 4.600c-1.700 1-2.500 2-2.500 4v.8" stroke-linecap="round" stroke-width="3.100"/><circle cx="20" cy="29.500" r="2.100" fill="#1f2329" stroke="none"/></svg>
<svg class="abs" style="left:26px;top:214.400px" width="20" height="20" viewBox="0 0 40 40" fill="none" stroke="#1f2329" stroke-width="3.300" stroke-linecap="round"><path d="M35.200 17.500a15.500 15.500 0 1 1-12-12.300"/><path d="M27.500 18.500a8 8 0 1 1-6.300-6.200"/><path d="M20 20l9-9" /><path d="M28.500 4.500l-1 7.500 7.500-1 3-4.500-4.500-.5-.5-4.500z" fill="#1f2329" stroke-width="1.500" stroke-linejoin="round"/></svg>
<svg class="abs" style="left:26px;top:259.500px" width="20" height="20" viewBox="0 0 1024 1024"><path fill="#1f2329" d="M600.704 64a32 32 0 0 1 30.464 22.208l35.200 109.376c14.784 7.232 28.928 15.360 42.432 24.512l112.384-24.192a32 32 0 0 1 34.432 15.360L944.320 364.800a32 32 0 0 1-4.032 37.504l-77.120 85.120a357.120 357.120 0 0 1 0 49.024l77.120 85.248a32 32 0 0 1 4.032 37.504l-88.704 153.600a32 32 0 0 1-34.432 15.296L708.800 803.904c-13.440 9.088-27.648 17.280-42.368 24.512l-35.264 109.376A32 32 0 0 1 600.704 960H423.296a32 32 0 0 1-30.464-22.208L357.696 828.480a351.616 351.616 0 0 1-42.560-24.640l-112.320 24.256a32 32 0 0 1-34.432-15.360L79.680 659.200a32 32 0 0 1 4.032-37.504l77.120-85.248a357.120 357.120 0 0 1 0-48.896l-77.120-85.248A32 32 0 0 1 79.680 364.800l88.704-153.600a32 32 0 0 1 34.432-15.296l112.320 24.256c13.568-9.152 27.776-17.408 42.560-24.640l35.200-109.312A32 32 0 0 1 423.232 64H600.640zm-23.424 64H446.720l-36.352 113.088-24.512 11.968a294.113 294.113 0 0 0-34.816 20.096l-22.656 15.360-116.224-25.088-65.280 113.152 79.680 88.192-1.920 27.136a293.120 293.120 0 0 0 0 40.192l1.920 27.136-79.808 88.192 65.344 113.152 116.224-25.024 22.656 15.296a294.113 294.113 0 0 0 34.816 20.096l24.512 11.968L446.720 896h130.688l36.480-113.152 24.448-11.904a288.282 288.282 0 0 0 34.752-20.096l22.592-15.296 116.288 25.024 65.280-113.152-79.744-88.192 1.920-27.136a293.120 293.120 0 0 0 0-40.256l-1.920-27.136 79.808-88.128-65.344-113.152-116.288 24.960-22.592-15.232a287.616 287.616 0 0 0-34.752-20.096l-24.448-11.904L577.344 128zM512 320a192 192 0 1 1 0 384 192 192 0 0 1 0-384zm0 64a128 128 0 1 0 0 256 128 128 0 0 0 0-256z"/></svg>
<!-- search -->
<div class="abs" style="left:1632px;top:135.500px;width:240px;height:32px;border:1px solid #d9dce1;border-radius:4px;background:#fff"></div>
<svg class="abs" style="left:1644px;top:144.500px" width="14" height="14" viewBox="0 0 1024 1024"><path fill="#646a73" d="m795.904 750.720 124.992 124.928a32 32 0 0 1-45.248 45.248L750.656 795.904a416 416 0 1 1 45.248-45.248zM480 832a352 352 0 1 0 0-704 352 352 0 0 0 0 704z"/></svg>
<div class="abs" style="left:1666px;top:141px;font-size:14px;line-height:22px;color:#8f959e;white-space:nowrap">按 文档名称 搜索</div>
<!-- pagination -->
<style>
.pg{position:absolute;top:896.800px;width:32px;height:22px;line-height:22px;text-align:center;font-size:14px;color:#1f2329}
</style>
<div class="abs" style="left:1364.500px;top:896.800px;font-size:14px;line-height:22px;white-space:nowrap">共 123 条</div>
<svg class="abs" style="left:1449.500px;top:901px" width="12" height="12" viewBox="0 0 1024 1024"><path fill="#bbbfc4" d="M609.408 149.376 277.760 489.600a32 32 0 0 0 0 44.672l331.648 340.352a29.120 29.120 0 0 0 41.728 0 30.592 30.592 0 0 0 0-42.752L339.264 511.936l311.872-319.872a30.592 30.592 0 0 0 0-42.688 29.120 29.120 0 0 0-41.728 0z"/></svg>
<div class="pg" style="left:1472px;color:#3370ff">1</div>
<div class="pg" style="left:1504px">2</div>
<div class="pg" style="left:1536px">3</div>
<div class="pg" style="left:1568px">4</div>
<div class="pg" style="left:1600px">5</div>
<div class="pg" style="left:1632px">6</div>
<div class="pg" style="left:1664px">7</div>
<svg class="abs" style="left:1706px;top:901px" width="12" height="12" viewBox="0 0 1024 1024"><path fill="#1f2329" d="M340.864 149.312a30.592 30.592 0 0 0 0 42.752L652.736 512 340.864 831.872a30.592 30.592 0 0 0 0 42.752 29.120 29.120 0 0 0 41.728 0L714.240 534.336a32 32 0 0 0 0-44.672L382.592 149.376a29.120 29.120 0 0 0-41.728 0z"/></svg>
<div class="abs" style="left:1744.500px;top:891px;width:127.500px;height:32px;border:1px solid #d9dce1;border-radius:4px;background:#fff"></div>
<div class="abs" style="left:1756.500px;top:896.800px;font-size:14px;line-height:22px;white-space:nowrap;letter-spacing:.750px">20条/页</div>
<svg class="abs" style="left:1846px;top:900px" width="14" height="14" viewBox="0 0 1024 1024"><path fill="#8f959e" d="M831.872 340.864 512 652.672 192.128 340.864a30.592 30.592 0 0 0-42.752 0 29.120 29.120 0 0 0 0 41.600L489.664 714.240a32 32 0 0 0 44.672 0l340.288-331.712a29.120 29.120 0 0 0 0-41.728 30.592 30.592 0 0 0-42.752 0z"/></svg>
<!-- dropdown -->
<style>
#dd{position:absolute;left:1789px;top:480.500px;width:106px;height:204px;background:#fff;border:1px solid #e0e3ec;border-radius:4px;box-shadow:0 3px 8px rgba(31,35,41,.10);padding:5px 0}
#dda{position:absolute;left:1836.800px;top:476.600px;width:10px;height:10px;background:#fff;border:1px solid #e0e3ec;border-right-color:transparent;border-bottom-color:transparent;transform:rotate(45deg);border-top-left-radius:2px}
.di{position:relative;height:32px;line-height:32px;font-size:14px;color:#1f2329;white-space:nowrap}
.di.hv{background:#e9e9ea}
.di svg{position:absolute;left:11px;top:9.100px}
.di span{position:absolute;left:30.200px;top:0.800px}
</style>
<div id="dd">
 <div class="di"><svg width="14" height="14" viewBox="0 0 1024 1024"><path fill="#1f2329" d="M600.704 64a32 32 0 0 1 30.464 22.208l35.200 109.376c14.784 7.232 28.928 15.360 42.432 24.512l112.384-24.192a32 32 0 0 1 34.432 15.360L944.320 364.800a32 32 0 0 1-4.032 37.504l-77.120 85.120a357.120 357.120 0 0 1 0 49.024l77.120 85.248a32 32 0 0 1 4.032 37.504l-88.704 153.600a32 32 0 0 1-34.432 15.296L708.800 803.904c-13.440 9.088-27.648 17.280-42.368 24.512l-35.264 109.376A32 32 0 0 1 600.704 960H423.296a32 32 0 0 1-30.464-22.208L357.696 828.480a351.616 351.616 0 0 1-42.560-24.640l-112.320 24.256a32 32 0 0 1-34.432-15.360L79.680 659.200a32 32 0 0 1 4.032-37.504l77.120-85.248a357.120 357.120 0 0 1 0-48.896l-77.120-85.248A32 32 0 0 1 79.680 364.800l88.704-153.600a32 32 0 0 1 34.432-15.296l112.320 24.256c13.568-9.152 27.776-17.408 42.560-24.640l35.200-109.312A32 32 0 0 1 423.232 64H600.640zm-23.424 64H446.720l-36.352 113.088-24.512 11.968a294.113 294.113 0 0 0-34.816 20.096l-22.656 15.360-116.224-25.088-65.280 113.152 79.680 88.192-1.920 27.136a293.120 293.120 0 0 0 0 40.192l1.920 27.136-79.808 88.192 65.344 113.152 116.224-25.024 22.656 15.296a294.113 294.113 0 0 0 34.816 20.096l24.512 11.968L446.720 896h130.688l36.480-113.152 24.448-11.904a288.282 288.282 0 0 0 34.752-20.096l22.592-15.296 116.288 25.024 65.280-113.152-79.744-88.192 1.920-27.136a293.120 293.120 0 0 0 0-40.256l-1.920-27.136 79.808-88.128-65.344-113.152-116.288 24.960-22.592-15.232a287.616 287.616 0 0 0-34.752-20.096l-24.448-11.904L577.344 128zM512 320a192 192 0 1 1 0 384 192 192 0 0 1 0-384zm0 64a128 128 0 1 0 0 256 128 128 0 0 0 0-256z"/></svg><span>设置</span></div>
 <div class="di"><svg width="14" height="14" viewBox="0 0 1024 1024"><path fill="#1f2329" d="M640 384v64H448a128 128 0 0 0-128 128v128a128 128 0 0 0 128 128h320a128 128 0 0 0 128-128V576a128 128 0 0 0-64-110.848V394.880c74.560 26.368 128 97.472 128 181.056v128a192 192 0 0 1-192 192H448a192 192 0 0 1-192-192V576a192 192 0 0 1 192-192h192z"/><path fill="#1f2329" d="M384 640v-64h192a128 128 0 0 0 128-128V320a128 128 0 0 0-128-128H256a128 128 0 0 0-128 128v128a128 128 0 0 0 64 110.848v70.272A192.064 192.064 0 0 1 64 448V320a192 192 0 0 1 192-192h320a192 192 0 0 1 192 192v128a192 192 0 0 1-192 192H384z"/></svg><span>生成问题</span></div>
 <div class="di"><svg width="14" height="14" viewBox="0 0 28 28" fill="none" stroke="#1f2329" stroke-width="2.200"><path d="M6 3.200H24.800V24.800H17"/><path d="M2 14H14.500"/><path d="M10 8.200l6.300 5.800-6.300 5.800z" fill="#1f2329" stroke="none"/></svg><span>迁移</span></div>
 <div class="di hv"><svg width="14" height="14" viewBox="0 0 28 28" fill="none" stroke="#1f2329" stroke-width="2.200"><path d="M17.500 3.200H3.200V24.800H17.500"/><path d="M10.500 14H25"/><path d="M19.800 8.800l5.400 5.200-5.400 5.200"/></svg><span>导出Excel</span></div>
 <div class="di"><svg width="14" height="14" viewBox="0 0 28 28" fill="none" stroke="#1f2329" stroke-width="2.200"><path d="M17.500 3.200H3.200V24.800H17.500"/><path d="M10.500 14H25"/><path d="M19.800 8.800l5.400 5.200-5.400 5.200"/></svg><span>导出Zip</span></div>
 <div class="di"><svg width="14" height="14" viewBox="0 0 28 28" fill="none" stroke="#1f2329" stroke-width="2.200"><path d="M1.500 6.500H26.500"/><path d="M9.500 6V2.800H18.500V6"/><path d="M4.800 6.500V25.200H23.200V6.500"/><path d="M11.200 11.500V20.500M16.800 11.500V20.500"/></svg><span>删除</span></div>
</div>
<div id="dda"></div>
<!-- dark tooltip -->
<div class="abs" style="left:1143px;top:805px;width:120px;height:95px;border-radius:4px;background:#3a3a3c"></div>
<div class="abs" style="left:1155.200px;top:820px;font-size:13px;line-height:20px;color:#e3e3e3;white-space:nowrap;-webkit-text-stroke:.200px #e3e3e3">保存截图</div>
<div class="abs" style="left:1155.200px;top:845px;font-size:13px;line-height:20px;color:#e3e3e3;white-space:nowrap;-webkit-text-stroke:.200px #e3e3e3">快捷键</div>
<div class="abs" style="left:1208px;top:846px;width:39px;height:16px;border-radius:4px;background:#fff"></div>
<svg class="abs" style="left:1215.600px;top:849.900px" width="7.500" height="8" viewBox="0 0 15 16" fill="none" stroke="#222" stroke-width="1.500"><path d="M1 .5V15H14V.5"/></svg>
<svg class="abs" style="left:1236px;top:849px" width="6" height="10" viewBox="0 0 12 20" fill="none" stroke="#1f2329" stroke-width="2.200"><path d="M1.500 7.500L6 3l4.500 4.500M1.500 12.500L6 17l4.500-4.500"/></svg>
<svg class="abs" style="left:1157px;top:874px" width="9" height="10" viewBox="0 0 18 20" fill="none" stroke="#e3e3e3" stroke-width="1.800"><path d="M1 .5V19H17V.5"/></svg>
<div class="abs" style="left:1168.500px;top:869.900px;font-size:13px;line-height:20px;color:#e3e3e3;white-space:nowrap;-webkit-text-stroke:.200px #e3e3e3">是空格键</div>
</div></div>
</body>
</html>
